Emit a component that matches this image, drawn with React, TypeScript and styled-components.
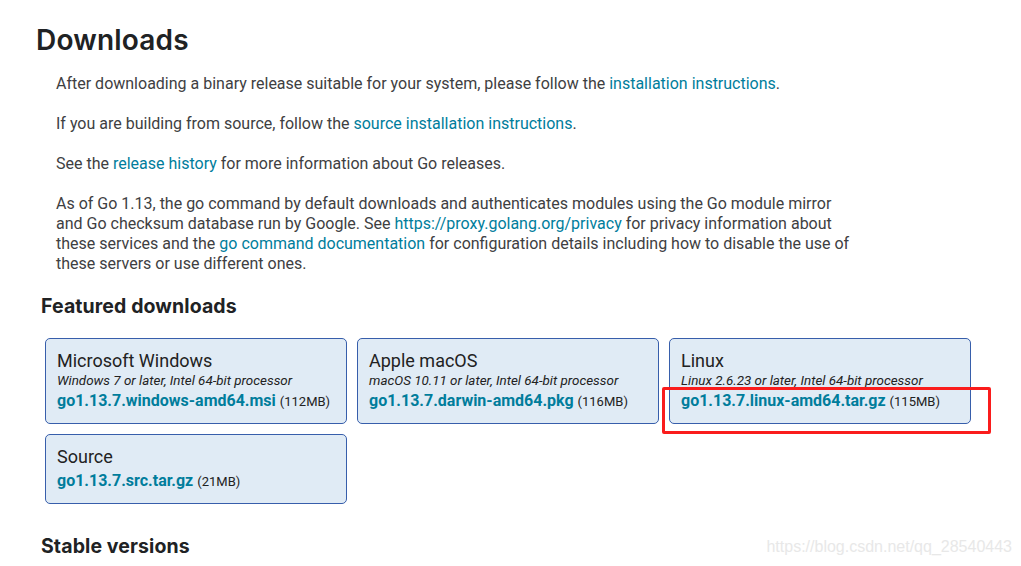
import React from "react";
import styled, { createGlobalStyle } from "styled-components";

const Global = createGlobalStyle`
  html, body { margin: 0; padding: 0; background: #fff; }
  body { font-family: Roboto, "Liberation Sans", Arial, sans-serif; color: #3e4042; }
  * { box-sizing: border-box; }
`;

const Page = styled.div`
  position: relative;
  width: 1021px;
  height: 566px;
  overflow: hidden;
  padding: 22px 0 0 36px;
`;

const Title = styled.h1`
  margin: 0 0 16px 0;
  font-family: Inter, "Open Sans", sans-serif;
  font-weight: 600;
  font-size: 28px;
  line-height: 36px;
  color: #202224;
  letter-spacing: 0.2px;
`;

const Para = styled.p`
  margin: 0 0 20px 20px;
  font-size: 16px;
  line-height: 20px;
  width: 800px;
`;

const Link = styled.a`
  color: #007d9c;
  text-decoration: none;
`;

const Section = styled.h2<{ $top: number }>`
  margin: ${(p) => p.$top}px 0 0 5px;
  font-family: Inter, "Open Sans", sans-serif;
  font-weight: 700;
  font-size: 19.5px;
  line-height: 24px;
  letter-spacing: 0.1px;
  color: #202224;
`;

const Grid = styled.div`
  display: grid;
  grid-template-columns: repeat(3, 302px);
  column-gap: 10px;
  row-gap: 10px;
  margin: 20px 0 0 9px;
`;

const Card = styled.div`
  position: relative;
  background: #e0ebf5;
  border: 1px solid #375eab;
  border-radius: 5px;
  padding: 11px 11px 10px 11px;
`;

const Platform = styled.div`
  font-size: 18px;
  line-height: 22px;
  color: #222;
`;

const Sub = styled.div`
  font-size: 13.4px;
  line-height: 18px;
  font-style: italic;
  color: #222;
`;

const FileLine = styled.div<{ $hasSub: boolean }>`
  margin-top: ${(p) => (p.$hasSub ? 0 : 2)}px;
  line-height: 22px;
  white-space: nowrap;
`;

const FileName = styled.span`
  font-size: 16px;
  font-weight: 700;
  color: #007d9c;
`;

const Size = styled.span`
  font-size: 13px;
  color: #222;
`;

const Highlight = styled.div`
  position: absolute;
  left: -8px;
  top: 48px;
  width: 329px;
  height: 47px;
  border: 3px solid #fa1c1c;
  border-radius: 2px;
  pointer-events: none;
`;

const Watermark = styled.div`
  position: absolute;
  right: 9px;
  top: 537px;
  font-family: "Liberation Sans", Arial, sans-serif;
  font-size: 16px;
  line-height: 20px;
  color: #e8e8e8;
`;

type Item = { platform: string; sub?: string; file: string; size: string; highlight?: boolean };

const items: Item[] = [
  { platform: "Microsoft Windows", sub: "Windows 7 or later, Intel 64-bit processor", file: "go1.13.7.windows-amd64.msi", size: "(112MB)" },
  { platform: "Apple macOS", sub: "macOS 10.11 or later, Intel 64-bit processor", file: "go1.13.7.darwin-amd64.pkg", size: "(116MB)" },
  { platform: "Linux", sub: "Linux 2.6.23 or later, Intel 64-bit processor", file: "go1.13.7.linux-amd64.tar.gz", size: "(115MB)", highlight: true },
  { platform: "Source", file: "go1.13.7.src.tar.gz", size: "(21MB)" },
];

export default function App() {
  return (
    <Page>
      <Global />
      <Title>Downloads</Title>
      <Para>
        After downloading a binary release suitable for your system, please follow the{" "}
        <Link href="#">installation instructions</Link>.
      </Para>
      <Para>
        If you are building from source, follow the <Link href="#">source installation instructions</Link>.
      </Para>
      <Para>
        See the <Link href="#">release history</Link> for more information about Go releases.
      </Para>
      <Para>
        As of Go 1.13, the go command by default downloads and authenticates modules using the Go module mirror
        and Go checksum database run by Google. See <Link href="#">https://proxy.golang.org/privacy</Link> for
        privacy information about these services and the <Link href="#">go command documentation</Link> for
        configuration details including how to disable the use of these servers or use different ones.
      </Para>
      <Section $top={2}>Featured downloads</Section>
      <Grid>
        {items.map((it) => (
          <Card key={it.file}>
            <Platform>{it.platform}</Platform>
            {it.sub && <Sub>{it.sub}</Sub>}
            <FileLine $hasSub={!!it.sub}>
              <FileName>{it.file}</FileName> <Size>{it.size}</Size>
            </FileLine>
            {it.highlight && <Highlight />}
          </Card>
        ))}
      </Grid>
      <Section $top={30}>Stable versions</Section>
      <Watermark>https://blog.csdn.net/qq_28540443</Watermark>
    </Page>
  );
}
